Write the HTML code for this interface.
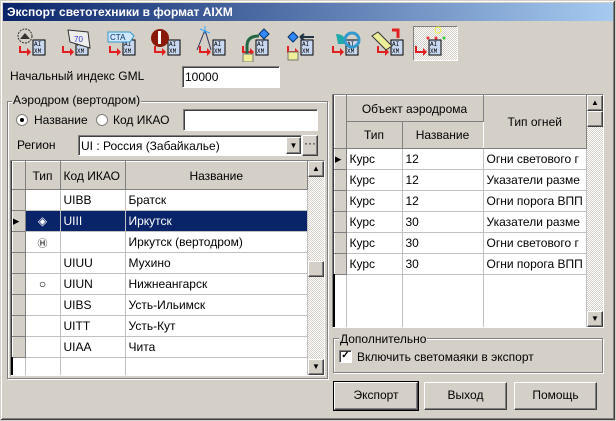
<!DOCTYPE html>
<html><head><meta charset="utf-8"><style>
*{box-sizing:border-box;margin:0;padding:0}
body{width:616px;height:421px;background:#d4d0c8;font-family:"Liberation Sans",sans-serif;font-size:12px;color:#000;position:relative;overflow:hidden}
.a{position:absolute}
.win{left:0;top:0;width:616px;height:421px;border:1px solid #d4d0c8;box-shadow:inset -1px -1px #404040,inset 1px 1px #fff,inset -2px -2px #808080}
.title{left:3px;top:3px;width:610px;height:18px;background:linear-gradient(90deg,#0a246a,#a6caf0);color:#fff;font-weight:bold;font-size:12px;line-height:18px;padding-left:4px}
.sunk{background:#fff;border:1px solid;border-color:#808080 #fff #fff #808080;box-shadow:inset 1px 1px #404040}
.grp{border:1px solid #808080;box-shadow:1px 1px #fff,inset 1px 1px #fff}
.gl{background:#d4d0c8;padding:0 1px;line-height:12px}
.btn{background:#d4d0c8;border:1px solid;border-color:#fff #404040 #404040 #fff;box-shadow:inset -1px -1px #808080;text-align:center}
table{border-collapse:collapse;position:absolute}
td{border:1px solid #c0c0c0;height:21px;padding:0 3px;white-space:nowrap;overflow:hidden}
.hd td,td.hd{background:#d4d0c8;border:1px solid;border-color:#fff #808080 #808080 #fff;text-align:center}
td.ind{background:#d4d0c8;border:1px solid;border-color:#fff #808080 #808080 #fff;padding:0}
tr.sel td{background:#0a246a;color:#fff}
.sb{background:repeating-conic-gradient(#d4d0c8 0 25%,#fff 0 50%) 0 0/2px 2px}
.ic{position:absolute;top:29px;width:34px;height:30px}
</style></head><body>
<div class="a win"></div>
<div class="a title">Экспорт светотехники в формат AIXM</div>

<!-- toolbar -->
<div class="a" style="left:413px;top:26px;width:45px;height:35px;border:1px solid;border-color:#808080 #fff #fff #808080;background:repeating-conic-gradient(#d4d0c8 0 25%,#fff 0 50%) 0 0/2px 2px"></div>
<svg class="a" style="left:0;top:26px" width="460" height="36">
<g font-family="Liberation Mono" font-size="6" fill="#000">
<!-- generic AIXM box & arrow at offsets -->
<g id="b"><rect x="33" y="14" width="12" height="15" fill="#c8d8f0" stroke="#000"/><text x="34" y="20">AI</text><text x="34" y="27">XM</text><path d="M21 20v5h6v-3l4 4-4 4v-3h-8v-7z" fill="#e02020"/></g>
<use href="#b" x="0"/><use href="#b" x="43"/><use href="#b" x="90"/><use href="#b" x="135"/><use href="#b" x="180"/><use href="#b" x="223"/><use href="#b" x="268"/><use href="#b" x="313"/><use href="#b" x="358"/><use href="#b" x="396"/>
</g>
<circle cx="25" cy="10" r="7" fill="none" stroke="#333" stroke-dasharray="2 1"/><path d="M20 13l5-6 5 6z" fill="#333"/>
<path d="M68 4l20 2 2 16-20-6z" fill="#eee" stroke="#333"/><text x="74" y="16" font-size="8" fill="#33c">70</text>
<path d="M108 6h22l4 4-4 6h-22z" fill="#cfe8ff" stroke="#39c"/><text x="110" y="14" font-size="8" fill="#036">CTA</text>
<circle cx="160" cy="12" r="9" fill="#8a1a08"/><rect x="158" y="5" width="3" height="13" fill="#fff"/>
<path d="M205 4l-8 20M205 4l6 20" stroke="#335" fill="none"/><path d="M200 3l10 4M205 0v8" stroke="#3af"/>
<path d="M247 30v-10q0-10 12-10" stroke="#264" stroke-width="3" fill="none"/><rect x="243" y="28" width="10" height="8" fill="#ee9" stroke="#777"/><path d="M264 3l5 5-5 5-5-5z" fill="#38f" stroke="#036"/>
<path d="M293 6l5 5-5 5-5-5z" fill="#38f" stroke="#036"/><path d="M300 11h14M300 11l4-3M300 11l4 3" stroke="#234" stroke-width="2"/><rect x="288" y="26" width="10" height="8" fill="#ee9" stroke="#777"/>
<path d="M336 8q10 0 10 10l-8 0z" fill="#2aa"/><circle cx="352" cy="14" r="7" fill="none" stroke="#39c" stroke-width="3"/>
<path d="M378 6l14 14-6 4-14-14z" fill="#ee9" stroke="#333"/><path d="M392 4h6v8" stroke="#e02020" stroke-width="3" fill="none"/>
<circle cx="438" cy="4" r="3" fill="none" stroke="#ee3"/><circle cx="428" cy="12" r="1.5" fill="#e33"/><circle cx="436" cy="12" r="1.5" fill="#e33"/><circle cx="444" cy="12" r="1.5" fill="#3c3"/>
</svg>

<div class="a" style="left:10px;top:69px">Начальный индекс GML</div>
<div class="a sunk" style="left:182px;top:66px;width:98px;height:22px;padding:3px 2px">10000</div>

<!-- left group -->
<div class="a grp" style="left:7px;top:101px;width:321px;height:278px"></div>
<div class="a gl" style="left:12px;top:94px">Аэродром (вертодром)</div>
<div class="a" style="left:16px;top:114px;width:12px;height:12px;border-radius:50%;background:#fff;border:1px solid #808080"><div style="width:4px;height:4px;background:#000;border-radius:50%;margin:3px"></div></div>
<div class="a" style="left:34px;top:113px">Название</div>
<div class="a" style="left:96px;top:114px;width:12px;height:12px;border-radius:50%;background:#fff;border:1px solid #808080"></div>
<div class="a" style="left:113px;top:113px">Код ИКАО</div>
<div class="a sunk" style="left:183px;top:109px;width:135px;height:22px"></div>
<div class="a" style="left:17px;top:138px">Регион</div>
<div class="a sunk" style="left:78px;top:135px;width:224px;height:21px;padding:3px 2px">UI : Россия (Забайкалье)</div>
<div class="a btn" style="left:286px;top:137px;width:15px;height:17px;font-size:8px;line-height:15px">▼</div>
<div class="a btn" style="left:302px;top:135px;width:16px;height:21px;line-height:15px">···</div>

<div class="a sunk" style="left:10px;top:160px;width:315px;height:216px;overflow:hidden">
<table style="left:0;top:0;width:297px;table-layout:fixed">
<colgroup><col style="width:13px"><col style="width:35px"><col style="width:65px"><col></colgroup>
<tr class="hd" style="height:28px"><td></td><td>Тип</td><td style="text-align:left">Код ИКАО</td><td>Название</td></tr>
<tr><td class="ind"></td><td></td><td>UIBB</td><td>Братск</td></tr>
<tr class="sel"><td class="ind" style="background:#d4d0c8;color:#000;font-size:9px">▶</td><td style="text-align:center">◈</td><td>UIII</td><td>Иркутск</td></tr>
<tr><td class="ind"></td><td style="text-align:center;font-size:10px">Ⓗ</td><td></td><td>Иркутск (вертодром)</td></tr>
<tr><td class="ind"></td><td></td><td>UIUU</td><td>Мухино</td></tr>
<tr><td class="ind"></td><td style="text-align:center">○</td><td>UIUN</td><td>Нижнеангарск</td></tr>
<tr><td class="ind"></td><td></td><td>UIBS</td><td>Усть-Ильимск</td></tr>
<tr><td class="ind"></td><td></td><td>UITT</td><td>Усть-Кут</td></tr>
<tr><td class="ind"></td><td></td><td>UIAA</td><td>Чита</td></tr>
<tr><td style="border-bottom:0;border-left:2px solid #000"></td><td></td><td></td><td></td></tr>
</table>
<div class="a sb" style="left:297px;top:0;width:16px;height:214px"></div>
<div class="a btn" style="left:297px;top:0;width:16px;height:16px;font-size:8px;line-height:13px">▲</div>
<div class="a btn" style="left:297px;top:100px;width:16px;height:16px"></div>
<div class="a btn" style="left:297px;top:198px;width:16px;height:16px;font-size:8px;line-height:13px">▼</div>
</div>

<!-- right grid -->
<div class="a sunk" style="left:332px;top:94px;width:272px;height:234px;overflow:hidden">
<table style="left:0;top:0;width:254px;table-layout:fixed">
<colgroup><col style="width:12px"><col style="width:56px"><col style="width:81px"><col></colgroup>
<tr style="height:26px"><td class="hd" rowspan="2"></td><td class="hd" colspan="2">Объект аэродрома</td><td class="hd" rowspan="2">Тип огней</td></tr>
<tr class="hd" style="height:27px"><td>Тип</td><td>Название</td></tr>
<tr><td class="ind" style="font-size:9px">▶</td><td>Курс</td><td>12</td><td>Огни светового г</td></tr>
<tr><td class="ind"></td><td>Курс</td><td>12</td><td>Указатели разме</td></tr>
<tr><td class="ind"></td><td>Курс</td><td>12</td><td>Огни порога ВПП</td></tr>
<tr><td class="ind"></td><td>Курс</td><td>30</td><td>Указатели разме</td></tr>
<tr><td class="ind"></td><td>Курс</td><td>30</td><td>Огни светового г</td></tr>
<tr><td class="ind"></td><td>Курс</td><td>30</td><td>Огни порога ВПП</td></tr>
<tr style="height:60px"><td style="border-bottom:0;border-left:2px solid #000"></td><td></td><td></td><td></td></tr>
</table>
<div class="a sb" style="left:254px;top:0;width:16px;height:232px"></div>
<div class="a btn" style="left:254px;top:0;width:16px;height:16px;font-size:8px;line-height:13px">▲</div>
<div class="a btn" style="left:254px;top:16px;width:16px;height:16px"></div>
<div class="a btn" style="left:254px;top:216px;width:16px;height:16px;font-size:8px;line-height:13px">▼</div>
</div>

<div class="a grp" style="left:333px;top:338px;width:270px;height:35px"></div>
<div class="a gl" style="left:339px;top:333px">Дополнительно</div>
<div class="a sunk" style="left:339px;top:350px;width:13px;height:13px;font-size:10px;line-height:10px;text-align:center;font-weight:bold">✓</div>
<div class="a" style="left:357px;top:350px">Включить светомаяки в экспорт</div>

<div class="a btn" style="left:334px;top:382px;width:84px;height:28px;line-height:24px;outline:1px solid #000">Экспорт</div>
<div class="a btn" style="left:424px;top:382px;width:83px;height:28px;line-height:24px">Выход</div>
<div class="a btn" style="left:514px;top:382px;width:83px;height:28px;line-height:24px">Помощь</div>
</body></html>
